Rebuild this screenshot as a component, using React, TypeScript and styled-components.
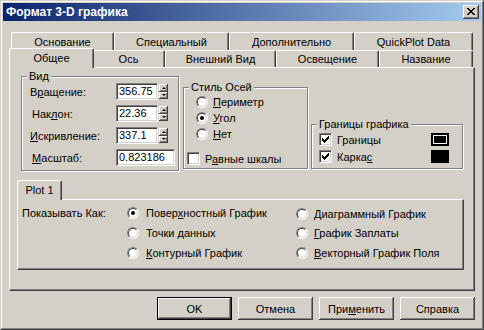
import styled, { createGlobalStyle, css } from 'styled-components'

const FACE = '#d4d0c8'
const SHADOW = '#808080'
const DARK = '#404040'

const GlobalStyle = createGlobalStyle`
  html, body { margin: 0; padding: 0; background: ${FACE}; }
  body {
    font-family: 'Liberation Sans', Arial, sans-serif;
    font-size: 11px;
    color: #000;
  }
  * { box-sizing: border-box; }
`

const Window = styled.div`
  width: 484px;
  height: 330px;
  background: ${FACE};
  border: 1px solid;
  border-color: ${FACE} ${DARK} ${DARK} ${FACE};
`

const Frame = styled.div`
  height: 100%;
  display: flex;
  flex-direction: column;
  padding: 1px;
  border: 1px solid;
  border-color: #fff ${SHADOW} ${SHADOW} #fff;
`

const TitleBar = styled.div`
  flex: none;
  height: 18px;
  display: flex;
  align-items: center;
  justify-content: space-between;
  padding: 0 2px 0 3px;
  background: linear-gradient(to right, #0a246a, #a6caf0);
  color: #fff;
  font-weight: bold;
  font-size: 12px;
`

const raised = css`
  background: ${FACE};
  border: none;
  box-shadow: inset -1px -1px ${DARK}, inset 1px 1px #fff, inset -2px -2px ${SHADOW};
`

const CloseButton = styled.div`
  ${raised};
  width: 16px;
  height: 14px;
  display: flex;
  align-items: center;
  justify-content: center;
  padding-bottom: 1px;
`

const Body = styled.div`
  flex: 1;
  padding: 11px 6px 0;
`

const TabRow = styled.div<{ $h: number; $top?: number }>`
  display: flex;
  align-items: flex-start;
  height: ${p => p.$h}px;
  padding: ${p => p.$top ?? 0}px 2px 0;
`

const Tab = styled.div<{ $w: number; $h: number; $active?: boolean }>`
  position: relative;
  flex: none;
  width: ${p => p.$w}px;
  height: ${p => p.$h}px;
  display: flex;
  align-items: center;
  justify-content: center;
  white-space: nowrap;
  background: ${FACE};
  border-top: 1px solid #fff;
  border-left: 1px solid #fff;
  border-right: 1px solid ${DARK};
  border-radius: 2px 2px 0 0;
  box-shadow: inset -1px 0 ${SHADOW};
  ${p =>
    p.$active &&
    css`
      z-index: 2;
      width: ${p.$w + 4}px;
      height: ${p.$h + 3}px;
      margin: -2px -2px -1px;
      padding-bottom: 2px;
    `}
`

const Panel = styled.div`
  height: 224px;
  border: 1px solid;
  border-color: #fff ${DARK} ${DARK} #fff;
  box-shadow: inset -1px -1px ${SHADOW};
  padding: 8px 10px 0 7px;
`

const TopRow = styled.div`
  display: flex;
  align-items: flex-start;
  padding-left: 4px;
`

const Group = styled.div<{ $w: number; $h: number; $top?: number; $gap?: number }>`
  position: relative;
  flex: none;
  width: ${p => p.$w}px;
  height: ${p => p.$h}px;
  margin-top: ${p => p.$top ?? 0}px;
  margin-left: ${p => p.$gap ?? 0}px;
  border: 1px solid ${SHADOW};
  box-shadow: inset 1px 1px #fff, 1px 1px #fff;
`

const Legend = styled.span`
  position: absolute;
  top: -7px;
  left: 5px;
  padding: 0 2px;
  line-height: 13px;
  background: ${FACE};
  white-space: nowrap;
`

const ViewGrid = styled.div`
  display: grid;
  grid-template-columns: 94px auto;
  grid-auto-rows: 17px;
  row-gap: 5px;
  align-items: center;
  padding-top: 6px;
`

const FieldLabel = styled.span<{ $indent: number }>`
  padding-left: ${p => p.$indent}px;
`

const Field = styled.div`
  display: flex;
  align-items: flex-start;
  gap: 1px;
`

const Input = styled.div<{ $w: number }>`
  width: ${p => p.$w}px;
  height: 17px;
  padding: 0 2px;
  line-height: 15px;
  background: #fff;
  border: 1px solid;
  border-color: ${SHADOW} #fff #fff ${SHADOW};
  box-shadow: inset 1px 1px ${DARK}, inset -1px -1px ${FACE};
`

const Spinner = styled.div`
  width: 9px;
  height: 15px;
  margin-top: 1px;
  display: flex;
  flex-direction: column;
`

const SpinButton = styled.div<{ $down?: boolean }>`
  ${raised};
  flex: 1;
  display: flex;
  align-items: center;
  justify-content: center;
  &::after {
    content: '';
    border-left: 2px solid transparent;
    border-right: 2px solid transparent;
    ${p =>
      p.$down
        ? css`border-top: 2px solid #000;`
        : css`border-bottom: 2px solid #000;`}
  }
`

const AxisBody = styled.div`
  padding: 6px 0 0 3px;
`

const RadioList = styled.div`
  padding-left: 9px;
`

const OptionRow = styled.div<{ $h?: number; $gap?: number }>`
  display: flex;
  align-items: center;
  gap: ${p => p.$gap ?? 5}px;
  height: ${p => p.$h ?? 16}px;
  white-space: nowrap;
`

const CheckRow = styled(OptionRow)`
  margin-top: 10px;
`

const Radio = styled.span<{ $on?: boolean }>`
  position: relative;
  flex: none;
  width: 12px;
  height: 12px;
  border-radius: 50%;
  background: #fff;
  border: 1px solid;
  border-color: ${SHADOW} #fff #fff ${SHADOW};
  &::before {
    content: '';
    position: absolute;
    inset: 0;
    border-radius: 50%;
    border: 1px solid;
    border-color: ${DARK} ${FACE} ${FACE} ${DARK};
  }
  ${p =>
    p.$on &&
    css`
      &::after {
        content: '';
        position: absolute;
        left: 3px;
        top: 3px;
        width: 4px;
        height: 4px;
        border-radius: 50%;
        background: #000;
      }
    `}
`

const CheckBox = styled.span`
  position: relative;
  flex: none;
  width: 13px;
  height: 13px;
  background: #fff;
  border: 1px solid;
  border-color: ${SHADOW} #fff #fff ${SHADOW};
  box-shadow: inset 1px 1px ${DARK}, inset -1px -1px ${FACE};
  display: flex;
`

const BordersBody = styled.div`
  display: flex;
  flex-direction: column;
  gap: 4px;
  padding: 8px 13px 0 7px;
`

const BorderLabel = styled.span`
  flex: 1;
`

const Swatch = styled.span<{ $ring?: boolean }>`
  flex: none;
  width: 18px;
  height: 13px;
  background: #000;
  border: 2px solid #000;
  box-shadow: ${p => (p.$ring ? 'inset 0 0 0 1px #fff' : 'none')};
`

const PlotArea = styled.div`
  margin-top: 9px;
`

const PlotPanel = styled.div`
  height: 71px;
  border: 1px solid;
  border-color: #fff ${DARK} ${DARK} #fff;
  box-shadow: inset -1px -1px ${SHADOW};
  padding: 3px 4px 0;
  display: grid;
  grid-template-columns: 105px 169px 1fr;
  grid-auto-rows: 20px;
  align-items: center;
`

const ShowLabel = styled.span`
  grid-row: 1;
  grid-column: 1;
`

const PlotOption = styled(OptionRow)<{ $col: number; $row: number }>`
  grid-column: ${p => p.$col};
  grid-row: ${p => p.$row};
  gap: ${p => (p.$col === 2 ? 7 : 6)}px;
  margin-top: ${p => (p.$col === 3 && p.$row === 1 ? 2 : 0)}px;
`

const ButtonBar = styled.div`
  display: flex;
  justify-content: flex-end;
  gap: 6px;
  margin-top: 6px;
`

const Button = styled.div<{ $default?: boolean }>`
  ${raised};
  width: 75px;
  height: 23px;
  display: flex;
  align-items: center;
  justify-content: center;
  ${p =>
    p.$default &&
    css`
      border: 1px solid #000;
    `}
`

const CloseGlyph = () => (
  <svg width="8" height="7" viewBox="0 0 8 7" shapeRendering="crispEdges">
    <path
      fill="#000"
      d="M0 0h2v1H0zM6 0h2v1H6zM1 1h2v1H1zM5 1h2v1H5zM2 2h4v1H2zM3 3h2v1H3zM2 4h4v1H2zM1 5h2v1H1zM5 5h2v1H5zM0 6h2v1H0zM6 6h2v1H6z"
    />
  </svg>
)

const CheckMark = () => (
  <svg width="11" height="11" viewBox="0 0 11 11" shapeRendering="crispEdges">
    <path
      fill="#000"
      d="M2 4h1v3H2zM3 5h1v3H3zM4 6h1v3H4zM5 5h1v3H5zM6 4h1v3H6zM7 3h1v3H7zM8 2h1v3H8z"
    />
  </svg>
)

const Check = ({ on }: { on?: boolean }) => <CheckBox>{on && <CheckMark />}</CheckBox>

const topTabs = [
  { label: 'Основание', w: 103 },
  { label: 'Специальный', w: 115 },
  { label: 'Дополнительно', w: 125 },
  { label: 'QuickPlot Data', w: 119 },
]

const frontTabs = [
  { label: 'Общее', w: 81, active: true },
  { label: 'Ось', w: 73 },
  { label: 'Внешний Вид', w: 111 },
  { label: 'Освещение', w: 103 },
  { label: 'Название', w: 94 },
]

export default function App() {
  return (
    <>
      <GlobalStyle />
      <Window>
        <Frame>
          <TitleBar>
            <span>Формат 3-D графика</span>
            <CloseButton>
              <CloseGlyph />
            </CloseButton>
          </TitleBar>
          <Body>
            <TabRow $h={18}>
              {topTabs.map(t => (
                <Tab key={t.label} $w={t.w} $h={18}>
                  {t.label}
                </Tab>
              ))}
            </TabRow>
            <TabRow $h={17}>
              {frontTabs.map(t => (
                <Tab key={t.label} $w={t.w} $h={17} $active={t.active}>
                  {t.label}
                </Tab>
              ))}
            </TabRow>
            <Panel>
              <TopRow>
                <Group $w={158} $h={95}>
                  <Legend>Вид</Legend>
                  <ViewGrid>
                    <FieldLabel $indent={8}>
                      В<u>р</u>ащение:
                    </FieldLabel>
                    <Field>
                      <Input $w={42}>356.75</Input>
                      <Spinner>
                        <SpinButton />
                        <SpinButton $down />
                      </Spinner>
                    </Field>
                    <FieldLabel $indent={10}>
                      Нак<u>л</u>он:
                    </FieldLabel>
                    <Field>
                      <Input $w={42}>22.36</Input>
                      <Spinner>
                        <SpinButton />
                        <SpinButton $down />
                      </Spinner>
                    </Field>
                    <FieldLabel $indent={8}>
                      <u>И</u>скривление:
                    </FieldLabel>
                    <Field>
                      <Input $w={42}>337.1</Input>
                      <Spinner>
                        <SpinButton />
                        <SpinButton $down />
                      </Spinner>
                    </Field>
                    <FieldLabel $indent={10}>
                      <u>М</u>асштаб:
                    </FieldLabel>
                    <Field>
                      <Input $w={59}>0.823186</Input>
                    </Field>
                  </ViewGrid>
                </Group>

                <Group $w={125} $h={82} $top={11} $gap={4}>
                  <Legend>Стиль Осей</Legend>
                  <AxisBody>
                    <RadioList>
                      <OptionRow>
                        <Radio />
                        <span>
                          <u>П</u>ериметр
                        </span>
                      </OptionRow>
                      <OptionRow>
                        <Radio $on />
                        <span>
                          <u>У</u>гол
                        </span>
                      </OptionRow>
                      <OptionRow>
                        <Radio />
                        <span>
                          <u>Н</u>ет
                        </span>
                      </OptionRow>
                    </RadioList>
                    <CheckRow $h={13}>
                      <Check />
                      <span>
                        Р<u>а</u>вные шкалы
                      </span>
                    </CheckRow>
                  </AxisBody>
                </Group>

                <Group $w={152} $h={45} $top={48} $gap={3}>
                  <Legend>Границы графика</Legend>
                  <BordersBody>
                    <OptionRow $h={13}>
                      <Check on />
                      <BorderLabel>Границы</BorderLabel>
                      <Swatch $ring />
                    </OptionRow>
                    <OptionRow $h={13}>
                      <Check on />
                      <BorderLabel>
                        Карка<u>с</u>
                      </BorderLabel>
                      <Swatch />
                    </OptionRow>
                  </BordersBody>
                </Group>
              </TopRow>

              <PlotArea>
                <TabRow $h={19} $top={2}>
                  <Tab $w={41} $h={17} $active>
                    Plot 1
                  </Tab>
                </TabRow>
                <PlotPanel>
                  <ShowLabel>Показывать Как:</ShowLabel>
                  <PlotOption $col={2} $row={1}>
                    <Radio $on />
                    <span>
                      Повер<u>х</u>ностный График
                    </span>
                  </PlotOption>
                  <PlotOption $col={2} $row={2}>
                    <Radio />
                    <span>Точки данных</span>
                  </PlotOption>
                  <PlotOption $col={2} $row={3}>
                    <Radio />
                    <span>
                      <u>К</u>онтурный График
                    </span>
                  </PlotOption>
                  <PlotOption $col={3} $row={1}>
                    <Radio />
                    <span>
                      <u>Д</u>иаграммный График
                    </span>
                  </PlotOption>
                  <PlotOption $col={3} $row={2}>
                    <Radio />
                    <span>
                      <u>Г</u>рафик Заплаты
                    </span>
                  </PlotOption>
                  <PlotOption $col={3} $row={3}>
                    <Radio />
                    <span>
                      <u>В</u>екторный График Поля
                    </span>
                  </PlotOption>
                </PlotPanel>
              </PlotArea>
            </Panel>

            <ButtonBar>
              <Button $default>OK</Button>
              <Button>Отмена</Button>
              <Button>
                При<u>м</u>енить
              </Button>
              <Button>Справка</Button>
            </ButtonBar>
          </Body>
        </Frame>
      </Window>
    </>
  )
}
